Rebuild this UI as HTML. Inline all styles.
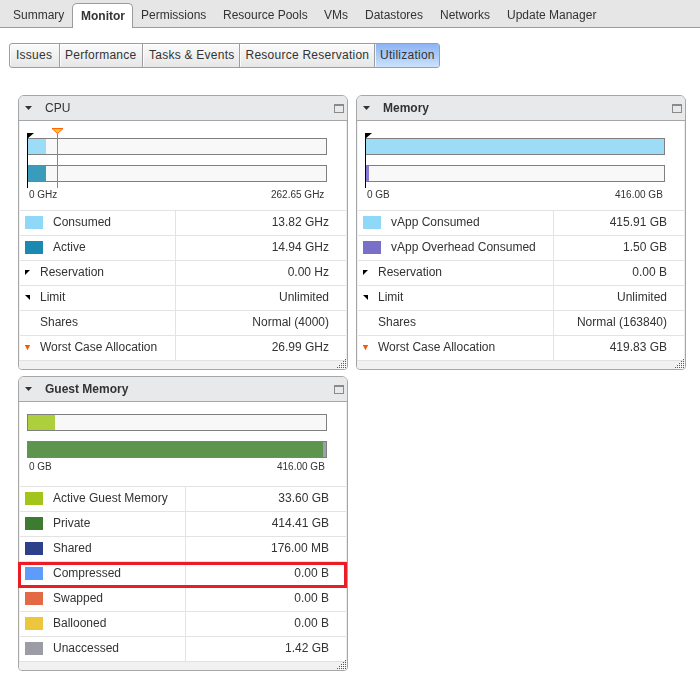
<!DOCTYPE html>
<html><head><meta charset="utf-8">
<style>
*{margin:0;padding:0;box-sizing:border-box}
html,body{width:700px;height:677px;background:#fff;overflow:hidden;font-family:"Liberation Sans",sans-serif;font-size:12px;color:#333}
.a{position:absolute;white-space:nowrap}
#tabbar{position:absolute;left:0;top:0;width:700px;height:28px;background:#e6e6e6;border-bottom:1px solid #9c9c9c}
.tab{position:absolute;top:8px;line-height:14px;color:#333}
#mon{position:absolute;left:72px;top:3px;width:61px;height:25px;background:#fff;border:1px solid #9c9c9c;border-bottom:none;border-radius:5px 5px 0 0}
#mon span{position:absolute;left:8px;top:5px;font-weight:bold;line-height:14px;color:#333}
#btns{position:absolute;left:9px;top:43px;width:431px;height:25px;border:1px solid #9d9d9d;border-radius:3px;background:linear-gradient(#fbfbfb,#e6e6e6);overflow:hidden;box-shadow:inset 1px 1px rgba(255,255,255,.8)}
.btn{position:absolute;top:0;height:23px;line-height:14px;padding-top:4px;color:#333;letter-spacing:0.25px}
.div{position:absolute;top:0;width:1px;height:23px;background:#9d9d9d;box-shadow:1px 0 rgba(255,255,255,.8)}
#util{position:absolute;left:365px;top:0;width:65px;height:23px;background:linear-gradient(#8cb4f4,#cbe2fd)}
.pt{position:absolute;border:1px solid #a6a6a6;border-radius:6px 6px 4px 4px;background:#fff;overflow:hidden;box-shadow:inset 1px 0 #f2f2f2,inset -1px 0 #ececec}
.ph{position:absolute;left:0;top:0;right:0;height:25px;background:#e8e9ea;border-bottom:1px solid #a6a6a6}
.ph .tri{position:absolute;left:6px;top:10px;width:8px;height:5px}
.ph .ttl{position:absolute;left:26px;top:5px;font-weight:bold;line-height:14px;color:#333}
.ph .max{position:absolute;right:3px;top:8px;width:10px;height:9px;border:1px solid #8a8a8a;border-top-width:2px}
.pf{position:absolute;left:0;right:0;bottom:0;height:9px;background:#f1f1f1;border-top:1px solid #e2e2e2}
.grip{position:absolute;left:317px;bottom:0;width:11px;height:11px}
.bar{position:absolute;width:300px;height:17px;border:1px solid #7f7f7f;background:#f8f8f8}
.bar i{position:absolute;left:0;top:0;bottom:0}
.lbl{position:absolute;font-size:10px;line-height:12px;color:#333}
.row{position:absolute;left:1px;right:1px;height:25px;border-top:1px solid #e3e3e3}
.row .cd{position:absolute;top:0;margin-left:-1px;width:1px;height:24px;background:#e3e3e3}
.row .n{position:absolute;top:4px;line-height:14px;color:#333}
.row .v{position:absolute;right:17px;top:4px;line-height:14px;color:#333;text-align:right}
.sw{position:absolute;left:5px;top:5px;width:18px;height:13px}
.ic{position:absolute;left:5px;top:9px;width:0;height:0}
.res{border-top:5px solid #000;border-right:5px solid transparent}
.lim{border-top:5px solid #000;border-left:5px solid transparent}
.wci{position:absolute;left:5px;top:9px}
.wc{border-top:5px solid #ee5a0a;border-left:2.5px solid transparent;border-right:2.5px solid transparent}
</style></head><body>

<div style="position:absolute;left:0;top:0;width:700px;height:30px;will-change:transform">
<div id="tabbar"></div>
<div class="tab a" style="left:13px">Summary</div>
<div id="mon"><span>Monitor</span></div>
<div class="tab a" style="left:141px">Permissions</div>
<div class="tab a" style="left:223px">Resource Pools</div>
<div class="tab a" style="left:324px">VMs</div>
<div class="tab a" style="left:365px">Datastores</div>
<div class="tab a" style="left:440px">Networks</div>
<div class="tab a" style="left:507px">Update Manager</div>
</div>

<div id="btns">
  <div id="util"></div>
  <div class="btn a" style="left:6px">Issues</div>
  <div class="div" style="left:49px"></div>
  <div class="btn a" style="left:55px">Performance</div>
  <div class="div" style="left:132px"></div>
  <div class="btn a" style="left:139px">Tasks &amp; Events</div>
  <div class="div" style="left:229px"></div>
  <div class="btn a" style="left:235.5px">Resource Reservation</div>
  <div class="div" style="left:364px"></div>
  <div class="btn a" style="left:370px">Utilization</div>
</div>

<div style="position:absolute;left:0;top:0;width:700px;height:677px;will-change:transform">
<!-- CPU -->
<div class="pt" style="left:18px;top:95px;width:330px;height:275px">
  <div class="ph"><svg class="tri" width="8" height="5"><polygon points="0,0 7,0 3.5,4" fill="#333"/></svg><div class="ttl" style="font-weight:normal">CPU</div><div class="max"></div></div>
  <div class="bar" style="left:8px;top:42px"><i style="width:18px;background:#9ddcf6"></i></div>
  <div class="bar" style="left:8px;top:69px"><i style="width:18px;background:#3a9cbb"></i></div>
  <div style="position:absolute;left:8px;top:37px;width:1px;height:55px;background:#000"></div>
  <div style="position:absolute;left:8px;top:37px;width:0;height:0;border-top:6px solid #000;border-right:7px solid transparent"></div>
  <div style="position:absolute;left:38px;top:36px;width:1px;height:56px;background:#ff6600"></div>
  <svg style="position:absolute;left:32px;top:32px" width="13" height="7"><polygon points="1,0.5 12,0.5 6.5,5.5" fill="#ffc630" stroke="#ff6600" stroke-width="1"/></svg>
  <div class="lbl a" style="left:10px;top:93px">0 GHz</div>
  <div class="lbl a" style="left:252px;top:93px">262.65 GHz</div>
  <div class="row" style="top:114px"><div class="cd" style="left:156px"></div><div class="sw" style="background:#8fd8f8"></div><div class="n a" style="left:33px">Consumed</div><div class="v a">13.82 GHz</div></div>
  <div class="row" style="top:139px"><div class="cd" style="left:156px"></div><div class="sw" style="background:#1b8ab0"></div><div class="n a" style="left:33px">Active</div><div class="v a">14.94 GHz</div></div>
  <div class="row" style="top:164px"><div class="cd" style="left:156px"></div><div class="ic res"></div><div class="n a" style="left:20px">Reservation</div><div class="v a">0.00 Hz</div></div>
  <div class="row" style="top:189px"><div class="cd" style="left:156px"></div><div class="ic lim"></div><div class="n a" style="left:20px">Limit</div><div class="v a">Unlimited</div></div>
  <div class="row" style="top:214px"><div class="cd" style="left:156px"></div><div class="n a" style="left:20px">Shares</div><div class="v a">Normal (4000)</div></div>
  <div class="row" style="top:239px"><div class="cd" style="left:156px"></div><svg class="wci" width="6" height="6"><polygon points="-0.1,0 5.1,0 2.5,5.2" fill="#ee5a0a"/></svg><div class="n a" style="left:20px">Worst Case Allocation</div><div class="v a">26.99 GHz</div></div>
  <div class="pf"></div><svg class="grip" width="11" height="11"><rect x="10" y="2" width="1" height="1" fill="#fff"/><rect x="8" y="4" width="1" height="1" fill="#fff"/><rect x="10" y="4" width="1" height="1" fill="#fff"/><rect x="6" y="6" width="1" height="1" fill="#fff"/><rect x="8" y="6" width="1" height="1" fill="#fff"/><rect x="10" y="6" width="1" height="1" fill="#fff"/><rect x="4" y="8" width="1" height="1" fill="#fff"/><rect x="6" y="8" width="1" height="1" fill="#fff"/><rect x="8" y="8" width="1" height="1" fill="#fff"/><rect x="10" y="8" width="1" height="1" fill="#fff"/><rect x="2" y="10" width="1" height="1" fill="#fff"/><rect x="4" y="10" width="1" height="1" fill="#fff"/><rect x="6" y="10" width="1" height="1" fill="#fff"/><rect x="8" y="10" width="1" height="1" fill="#fff"/><rect x="10" y="10" width="1" height="1" fill="#fff"/><rect x="9" y="1" width="1" height="1" fill="#5a5a5a"/><rect x="7" y="3" width="1" height="1" fill="#5a5a5a"/><rect x="9" y="3" width="1" height="1" fill="#5a5a5a"/><rect x="5" y="5" width="1" height="1" fill="#5a5a5a"/><rect x="7" y="5" width="1" height="1" fill="#5a5a5a"/><rect x="9" y="5" width="1" height="1" fill="#5a5a5a"/><rect x="3" y="7" width="1" height="1" fill="#5a5a5a"/><rect x="5" y="7" width="1" height="1" fill="#5a5a5a"/><rect x="7" y="7" width="1" height="1" fill="#5a5a5a"/><rect x="9" y="7" width="1" height="1" fill="#5a5a5a"/><rect x="1" y="9" width="1" height="1" fill="#5a5a5a"/><rect x="3" y="9" width="1" height="1" fill="#5a5a5a"/><rect x="5" y="9" width="1" height="1" fill="#5a5a5a"/><rect x="7" y="9" width="1" height="1" fill="#5a5a5a"/><rect x="9" y="9" width="1" height="1" fill="#5a5a5a"/></svg>
</div>

<!-- Memory -->
<div class="pt" style="left:356px;top:95px;width:330px;height:275px">
  <div class="ph"><svg class="tri" width="8" height="5"><polygon points="0,0 7,0 3.5,4" fill="#333"/></svg><div class="ttl">Memory</div><div class="max"></div></div>
  <div class="bar" style="left:8px;top:42px"><i style="width:298px;background:#9ddcf6"></i></div>
  <div class="bar" style="left:8px;top:69px"><i style="width:3px;background:#867bd3"></i></div>
  <div style="position:absolute;left:8px;top:37px;width:1px;height:55px;background:#000"></div>
  <div style="position:absolute;left:8px;top:37px;width:0;height:0;border-top:6px solid #000;border-right:7px solid transparent"></div>
  <div class="lbl a" style="left:10px;top:93px">0 GB</div>
  <div class="lbl a" style="left:258px;top:93px">416.00 GB</div>
  <div class="row" style="top:114px"><div class="cd" style="left:196px"></div><div class="sw" style="background:#8fd8f8"></div><div class="n a" style="left:33px">vApp Consumed</div><div class="v a">415.91 GB</div></div>
  <div class="row" style="top:139px"><div class="cd" style="left:196px"></div><div class="sw" style="background:#7a6fc8"></div><div class="n a" style="left:33px">vApp Overhead Consumed</div><div class="v a">1.50 GB</div></div>
  <div class="row" style="top:164px"><div class="cd" style="left:196px"></div><div class="ic res"></div><div class="n a" style="left:20px">Reservation</div><div class="v a">0.00 B</div></div>
  <div class="row" style="top:189px"><div class="cd" style="left:196px"></div><div class="ic lim"></div><div class="n a" style="left:20px">Limit</div><div class="v a">Unlimited</div></div>
  <div class="row" style="top:214px"><div class="cd" style="left:196px"></div><div class="n a" style="left:20px">Shares</div><div class="v a">Normal (163840)</div></div>
  <div class="row" style="top:239px"><div class="cd" style="left:196px"></div><svg class="wci" width="6" height="6"><polygon points="-0.1,0 5.1,0 2.5,5.2" fill="#ee5a0a"/></svg><div class="n a" style="left:20px">Worst Case Allocation</div><div class="v a">419.83 GB</div></div>
  <div class="pf"></div><svg class="grip" width="11" height="11"><rect x="10" y="2" width="1" height="1" fill="#fff"/><rect x="8" y="4" width="1" height="1" fill="#fff"/><rect x="10" y="4" width="1" height="1" fill="#fff"/><rect x="6" y="6" width="1" height="1" fill="#fff"/><rect x="8" y="6" width="1" height="1" fill="#fff"/><rect x="10" y="6" width="1" height="1" fill="#fff"/><rect x="4" y="8" width="1" height="1" fill="#fff"/><rect x="6" y="8" width="1" height="1" fill="#fff"/><rect x="8" y="8" width="1" height="1" fill="#fff"/><rect x="10" y="8" width="1" height="1" fill="#fff"/><rect x="2" y="10" width="1" height="1" fill="#fff"/><rect x="4" y="10" width="1" height="1" fill="#fff"/><rect x="6" y="10" width="1" height="1" fill="#fff"/><rect x="8" y="10" width="1" height="1" fill="#fff"/><rect x="10" y="10" width="1" height="1" fill="#fff"/><rect x="9" y="1" width="1" height="1" fill="#5a5a5a"/><rect x="7" y="3" width="1" height="1" fill="#5a5a5a"/><rect x="9" y="3" width="1" height="1" fill="#5a5a5a"/><rect x="5" y="5" width="1" height="1" fill="#5a5a5a"/><rect x="7" y="5" width="1" height="1" fill="#5a5a5a"/><rect x="9" y="5" width="1" height="1" fill="#5a5a5a"/><rect x="3" y="7" width="1" height="1" fill="#5a5a5a"/><rect x="5" y="7" width="1" height="1" fill="#5a5a5a"/><rect x="7" y="7" width="1" height="1" fill="#5a5a5a"/><rect x="9" y="7" width="1" height="1" fill="#5a5a5a"/><rect x="1" y="9" width="1" height="1" fill="#5a5a5a"/><rect x="3" y="9" width="1" height="1" fill="#5a5a5a"/><rect x="5" y="9" width="1" height="1" fill="#5a5a5a"/><rect x="7" y="9" width="1" height="1" fill="#5a5a5a"/><rect x="9" y="9" width="1" height="1" fill="#5a5a5a"/></svg>
</div>

<!-- Guest Memory -->
<div class="pt" style="left:18px;top:376px;width:330px;height:295px">
  <div class="ph"><svg class="tri" width="8" height="5"><polygon points="0,0 7,0 3.5,4" fill="#333"/></svg><div class="ttl">Guest Memory</div><div class="max"></div></div>
  <div class="bar" style="left:8px;top:37px"><i style="width:27px;background:#aecf3c"></i></div>
  <div class="bar" style="left:8px;top:64px"><i style="width:295px;background:#5e954e"></i><i style="left:295px;width:3px;background:#a09fae"></i></div>
  <div class="lbl a" style="left:10px;top:84px">0 GB</div>
  <div class="lbl a" style="left:258px;top:84px">416.00 GB</div>
  <div class="row" style="top:109px"><div class="cd" style="left:166px"></div><div class="sw" style="background:#a3c51b"></div><div class="n a" style="left:33px">Active Guest Memory</div><div class="v a">33.60 GB</div></div>
  <div class="row" style="top:134px"><div class="cd" style="left:166px"></div><div class="sw" style="background:#3d7b30"></div><div class="n a" style="left:33px">Private</div><div class="v a">414.41 GB</div></div>
  <div class="row" style="top:159px"><div class="cd" style="left:166px"></div><div class="sw" style="background:#2c418a"></div><div class="n a" style="left:33px">Shared</div><div class="v a">176.00 MB</div></div>
  <div class="row" style="top:184px"><div class="cd" style="left:166px"></div><div class="sw" style="background:#5e9cfb"></div><div class="n a" style="left:33px">Compressed</div><div class="v a">0.00 B</div></div>
  <div class="row" style="top:209px"><div class="cd" style="left:166px"></div><div class="sw" style="background:#e46a45"></div><div class="n a" style="left:33px">Swapped</div><div class="v a">0.00 B</div></div>
  <div class="row" style="top:234px"><div class="cd" style="left:166px"></div><div class="sw" style="background:#ecc63c"></div><div class="n a" style="left:33px">Ballooned</div><div class="v a">0.00 B</div></div>
  <div class="row" style="top:259px"><div class="cd" style="left:166px"></div><div class="sw" style="background:#9c9ca6"></div><div class="n a" style="left:33px">Unaccessed</div><div class="v a">1.42 GB</div></div>
  <div class="pf"></div><svg class="grip" width="11" height="11"><rect x="10" y="2" width="1" height="1" fill="#fff"/><rect x="8" y="4" width="1" height="1" fill="#fff"/><rect x="10" y="4" width="1" height="1" fill="#fff"/><rect x="6" y="6" width="1" height="1" fill="#fff"/><rect x="8" y="6" width="1" height="1" fill="#fff"/><rect x="10" y="6" width="1" height="1" fill="#fff"/><rect x="4" y="8" width="1" height="1" fill="#fff"/><rect x="6" y="8" width="1" height="1" fill="#fff"/><rect x="8" y="8" width="1" height="1" fill="#fff"/><rect x="10" y="8" width="1" height="1" fill="#fff"/><rect x="2" y="10" width="1" height="1" fill="#fff"/><rect x="4" y="10" width="1" height="1" fill="#fff"/><rect x="6" y="10" width="1" height="1" fill="#fff"/><rect x="8" y="10" width="1" height="1" fill="#fff"/><rect x="10" y="10" width="1" height="1" fill="#fff"/><rect x="9" y="1" width="1" height="1" fill="#5a5a5a"/><rect x="7" y="3" width="1" height="1" fill="#5a5a5a"/><rect x="9" y="3" width="1" height="1" fill="#5a5a5a"/><rect x="5" y="5" width="1" height="1" fill="#5a5a5a"/><rect x="7" y="5" width="1" height="1" fill="#5a5a5a"/><rect x="9" y="5" width="1" height="1" fill="#5a5a5a"/><rect x="3" y="7" width="1" height="1" fill="#5a5a5a"/><rect x="5" y="7" width="1" height="1" fill="#5a5a5a"/><rect x="7" y="7" width="1" height="1" fill="#5a5a5a"/><rect x="9" y="7" width="1" height="1" fill="#5a5a5a"/><rect x="1" y="9" width="1" height="1" fill="#5a5a5a"/><rect x="3" y="9" width="1" height="1" fill="#5a5a5a"/><rect x="5" y="9" width="1" height="1" fill="#5a5a5a"/><rect x="7" y="9" width="1" height="1" fill="#5a5a5a"/><rect x="9" y="9" width="1" height="1" fill="#5a5a5a"/></svg>
</div>

<div style="position:absolute;left:18px;top:562px;width:329px;height:26px;border:3px solid #ec1c24"></div>

</div>
</body></html>
